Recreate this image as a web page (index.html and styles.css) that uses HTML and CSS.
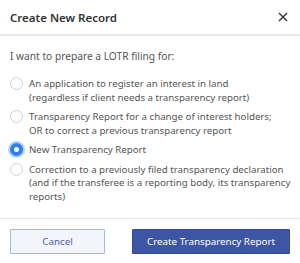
FILE: index.html
```html
<!DOCTYPE html>
<html lang="en">
<head>
  <meta charset="UTF-8">
  <title>Create New Record</title>
  <link rel="stylesheet" href="styles.css">
</head>
<body>
  <div class="dialog">
    <header class="dialog-head">
      <h2>Create New Record</h2>
      <button class="close-btn" aria-label="Close">
        <svg width="10" height="10" viewBox="0 0 10 10"><path d="M1 1L9 9M9 1L1 9" stroke="#333" stroke-width="1.4"/></svg>
      </button>
    </header>

    <section class="dialog-body">
      <p class="intro">I want to prepare a LOTR filing for:</p>
      <label class="option">
        <span class="radio"></span>
        <span class="label-text">An application to register an interest in land<br>(regardless if client needs a transparency report)</span>
      </label>
      <label class="option">
        <span class="radio"></span>
        <span class="label-text">Transparency Report for a change of interest holders;<br>OR to correct a previous transparency report</span>
      </label>
      <label class="option">
        <span class="radio checked"></span>
        <span class="label-text">New Transparency Report</span>
      </label>
      <label class="option">
        <span class="radio"></span>
        <span class="label-text">Correction to a previously filed transparency declaration<br>(and if the transferee is a reporting body, its transparency<br>reports)</span>
      </label>
    </section>

    <footer class="dialog-foot">
      <button class="btn btn-cancel">Cancel</button>
      <button class="btn btn-primary">Create Transparency Report</button>
    </footer>
  </div>
</body>
</html>
```

FILE: styles.css
```css
* {
  margin: 0;
  padding: 0;
  box-sizing: border-box;
}

body {
  font-family: 'Noto Sans', 'Open Sans', sans-serif;
  font-size: 9.7px;
  color: #555;
  background: #fff;
  width: 300px;
  height: 263px;
  overflow: hidden;
}

.dialog {
  width: 300px;
  height: 263px;
  background: #fff;
  display: flex;
  flex-direction: column;
}

/* Header */
.dialog-head {
  display: flex;
  align-items: center;
  justify-content: space-between;
  height: 36px;
  padding: 0 12px 0 10px;
  border-bottom: 2px solid #e8e8e8;
}

.dialog-head h2 {
  font-size: 11.5px;
  font-weight: 600;
  color: #333;
}

.close-btn {
  background: none;
  border: none;
  width: 10px;
  height: 10px;
  display: flex;
  cursor: pointer;
}

/* Body */
.dialog-body {
  padding: 14px 4px 0 10px;
  height: 183px;
  border-bottom: 1px solid #e3e6ea;
}

.intro {
  font-size: 10.2px;
  line-height: 13.5px;
  margin-bottom: 13.5px;
}

.option {
  display: flex;
  align-items: flex-start;
  gap: 6px;
  line-height: 13.5px;
  margin-bottom: 6px;
}

.label-text {
  white-space: nowrap;
}

.radio {
  flex: none;
  width: 13px;
  height: 13px;
  margin-top: 0;
  border: 1px solid #cdd0d3;
  border-radius: 50%;
  background: #fff;
}

.radio.checked {
  border: 4px solid #2f80ed;
  box-shadow: 0 0 0 2px #b7d3f8;
}

/* Footer */
.dialog-foot {
  display: flex;
  justify-content: space-between;
  padding: 10px 10px 0 10px;
}

.btn {
  height: 25px;
  font-family: inherit;
  font-size: 9.8px;
  border-radius: 1px;
  cursor: pointer;
}

.btn-cancel {
  width: 95px;
  background: #f3f5fb;
  border: 1px solid #a9b5dc;
  color: #4a62ad;
}

.btn-primary {
  width: 158px;
  background: #3c55a5;
  border: 1px solid #34499a;
  color: #fff;
}
```
